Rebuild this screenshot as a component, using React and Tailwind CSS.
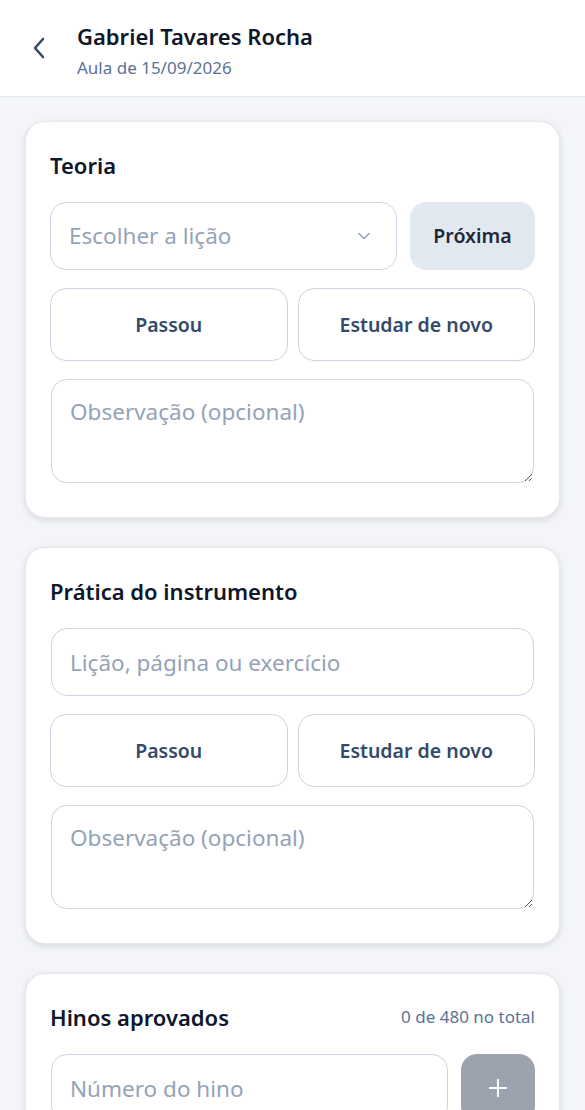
import { ChevronDown, Plus } from 'lucide-react'

function ResultButtons() {
  return (
    <div className="grid grid-cols-2 gap-[10px]">
      <button className="h-[73px] rounded-[16px] border border-[#cbd5e1] bg-white text-[19.5px] font-semibold text-[#334a6b]">
        Passou
      </button>
      <button className="h-[73px] rounded-[16px] border border-[#cbd5e1] bg-white text-[19.5px] font-semibold text-[#334a6b]">
        Estudar de novo
      </button>
    </div>
  )
}

function Note() {
  return (
    <textarea
      placeholder="Observação (opcional)"
      className="mx-px h-[104px] resize-y rounded-[16px] border border-[#cbd5e1] bg-white px-[18px] py-[17px] text-[22.5px] leading-[1.3] text-[#0f172a] outline-none placeholder:text-[#94a3b8]"
    />
  )
}

function Card({ children }) {
  return (
    <section className="rounded-[20px] border border-[#e5e7eb] bg-white px-[24px] pt-[28px] pb-[34px] shadow-[0_2px_6px_rgba(15,23,42,0.12)]">
      {children}
    </section>
  )
}

export default function App() {
  return (
    <div className="min-h-screen bg-[#f3f5f8] font-['Noto_Sans',sans-serif]">
      <header className="flex h-[97px] items-center gap-[31px] border-b border-[#e2e8f0] bg-white pl-[32px]">
        <svg width="14" height="22" viewBox="0 0 14 22" fill="none" className="text-[#334a6b]">
          <polyline points="11,2 3,11 11,20" stroke="currentColor" strokeWidth="2.6" strokeLinecap="round" strokeLinejoin="round" />
        </svg>
        <div className="mt-[5px]">
          <h1 className="text-[22px] leading-[30px] font-semibold text-[#0f172a]">Gabriel Tavares Rocha</h1>
          <p className="mt-[5px] text-[17px] leading-[24px] text-[#5a7394]">Aula de 15/09/2026</p>
        </div>
      </header>

      <main className="flex flex-col gap-[29px] px-[25px] pt-[24px] pb-[30px]">
        <Card>
          <h2 className="text-[22px] leading-[30px] font-semibold text-[#0f172a]">Teoria</h2>
          <div className="mt-[22px] flex flex-col gap-[18px]">
            <div className="flex gap-[13px]">
              <div className="flex h-[68px] flex-1 items-center justify-between rounded-[16px] border border-[#cbd5e1] bg-white pr-[22px] pl-[18px]">
                <span className="text-[22.5px] text-[#94a3b8]">Escolher a lição</span>
                <ChevronDown size={20} strokeWidth={1.75} className="text-[#94a3b8]" />
              </div>
              <button className="h-[68px] w-[125px] rounded-[16px] bg-[#e2e8f0] text-[19.5px] font-semibold text-[#1e293b]">
                Próxima
              </button>
            </div>
            <ResultButtons />
            <Note />
          </div>
        </Card>

        <Card>
          <h2 className="text-[22px] leading-[30px] font-semibold text-[#0f172a]">Prática do instrumento</h2>
          <div className="mt-[22px] flex flex-col gap-[18px]">
            <input
              placeholder="Lição, página ou exercício"
              className="mx-px h-[68px] rounded-[16px] border border-[#cbd5e1] bg-white px-[18px] text-[22.5px] outline-none placeholder:text-[#94a3b8]"
            />
            <ResultButtons />
            <Note />
          </div>
        </Card>

        <Card>
          <div className="flex items-center justify-between">
            <h2 className="text-[22px] leading-[30px] font-semibold text-[#0f172a]">Hinos aprovados</h2>
            <span className="text-[17px] text-[#5a7394]">0 de 480 no total</span>
          </div>
          <div className="mt-[22px] flex gap-[13px]">
            <input
              placeholder="Número do hino"
              className="ml-px h-[68px] min-w-0 flex-1 rounded-[16px] border border-[#cbd5e1] bg-white px-[18px] text-[22.5px] outline-none placeholder:text-[#94a3b8]"
            />
            <button className="flex h-[68px] w-[74px] items-center justify-center rounded-[16px] bg-[#9ca3af] text-white">
              <Plus size={28} strokeWidth={1.75} />
            </button>
          </div>
        </Card>
      </main>
    </div>
  )
}
